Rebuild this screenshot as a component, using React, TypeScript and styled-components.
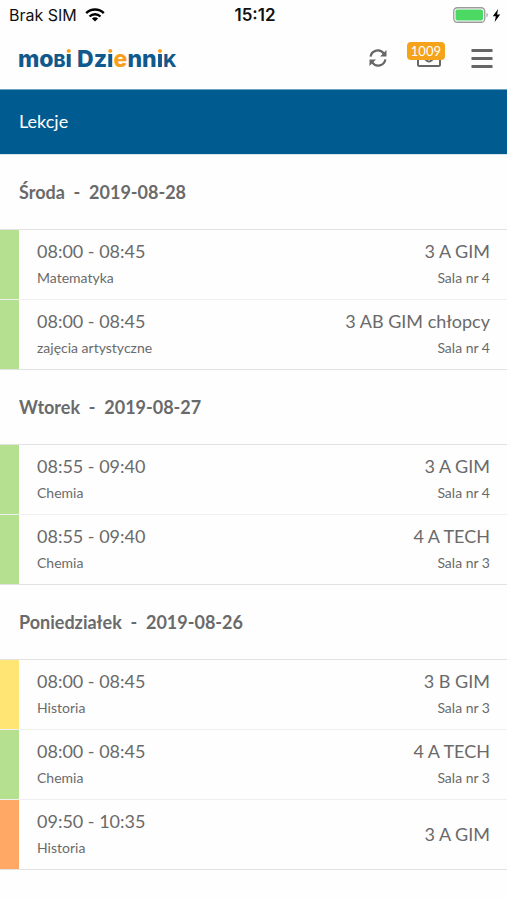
import React from "react";
import styled, { createGlobalStyle } from "styled-components";

type Tone = "green" | "yellow" | "orange";

interface Lesson {
  time: string;
  subject: string;
  group: string;
  room?: string;
  tone: Tone;
}

interface Day {
  name: string;
  date: string;
  lessons: Lesson[];
}

const tones: Record<Tone, string> = {
  green: "#b5e08f",
  yellow: "#ffe573",
  orange: "#ffa764",
};

const days: Day[] = [
  {
    name: "Środa",
    date: "2019-08-28",
    lessons: [
      { time: "08:00 - 08:45", subject: "Matematyka", group: "3 A GIM", room: "Sala nr 4", tone: "green" },
      { time: "08:00 - 08:45", subject: "zajęcia artystyczne", group: "3 AB GIM chłopcy", room: "Sala nr 4", tone: "green" },
    ],
  },
  {
    name: "Wtorek",
    date: "2019-08-27",
    lessons: [
      { time: "08:55 - 09:40", subject: "Chemia", group: "3 A GIM", room: "Sala nr 4", tone: "green" },
      { time: "08:55 - 09:40", subject: "Chemia", group: "4 A TECH", room: "Sala nr 3", tone: "green" },
    ],
  },
  {
    name: "Poniedziałek",
    date: "2019-08-26",
    lessons: [
      { time: "08:00 - 08:45", subject: "Historia", group: "3 B GIM", room: "Sala nr 3", tone: "yellow" },
      { time: "08:00 - 08:45", subject: "Chemia", group: "4 A TECH", room: "Sala nr 3", tone: "green" },
      { time: "09:50 - 10:35", subject: "Historia", group: "3 A GIM", tone: "orange" },
    ],
  },
];

const GlobalStyle = createGlobalStyle`
  *, *::before, *::after { box-sizing: border-box; }
  body {
    margin: 0;
    background: #fefefe;
    color: #6a6a6a;
    font-family: Lato, "Open Sans", sans-serif;
  }
`;

const Page = styled.div`
  min-height: 100vh;
`;

const StatusBar = styled.div`
  display: grid;
  grid-template-columns: 1fr auto 1fr;
  align-items: center;
  height: 30px;
  padding: 0 6px 0 9px;
  color: #111;
  font: 400 16px/20px Inter, "Liberation Sans", sans-serif;
`;

const Carrier = styled.div`
  display: flex;
  align-items: center;
  gap: 8px;
`;

const Clock = styled.time`
  font-size: 17px;
  font-weight: 600;
`;

const Power = styled.div`
  display: flex;
  align-items: center;
  justify-content: flex-end;
  gap: 3px;
`;

const TopBar = styled.header`
  display: flex;
  align-items: center;
  justify-content: space-between;
  height: 60px;
  padding: 0 14px 3px 18px;
  border-bottom: 1px solid #6fa3c4;
`;

const Logo = styled.a`
  padding-top: 4px;
  color: #11598c;
  font: 800 23px/28px Inter, "Open Sans", sans-serif;
  text-decoration: none;
  white-space: nowrap;
`;

const LogoCap = styled.span`
  font-size: 18px;
`;

const LogoAccent = styled.span`
  color: #f8a01c;
`;

const LogoDotted = styled.span`
  background: linear-gradient(#f8a01c 9px, #11598c 9px);
  background-clip: text;
  -webkit-background-clip: text;
  color: transparent;
`;

const Actions = styled.nav`
  display: flex;
  align-items: center;
  gap: 30px;
`;

const IconButton = styled.button`
  position: relative;
  display: flex;
  align-items: center;
  justify-content: center;
  padding: 0;
  border: 0;
  background: none;
  color: #666;
  cursor: pointer;
`;

const Badge = styled.span`
  position: absolute;
  bottom: 7px;
  right: -4px;
  padding: 0 4px;
  border-radius: 4px;
  background: #f5a31a;
  color: #fff;
  font: 400 13px/18px Lato, sans-serif;
`;

const TitleBar = styled.div`
  padding: 19px 19px 21px;
  border-bottom: 1px solid #d5e2ec;
  background: #005b90;
`;

const Title = styled.h1`
  margin: 0;
  color: #fff;
  font-size: 18px;
  font-weight: 400;
  line-height: 24px;
`;

const DayHeading = styled.h2`
  margin: 0;
  padding: 25px 19px;
  font-size: 18px;
  font-weight: 700;
  line-height: 24px;
  white-space: pre-wrap;
`;

const LessonList = styled.ul`
  margin: 0;
  padding: 0;
  border: solid #e2e2e2;
  border-width: 1px 0;
  list-style: none;
`;

const LessonRow = styled.li<{ $tone: Tone }>`
  display: flex;
  align-items: center;
  justify-content: space-between;
  min-height: 69px;
  padding: 0 17px 0 18px;
  border-left: 19px solid ${({ $tone }) => tones[$tone]};
`;

const Separator = styled.li`
  height: 1px;
  background: #efefef;
`;

const Column = styled.div<{ $end?: boolean }>`
  display: flex;
  flex-direction: column;
  gap: 5px;
  padding-bottom: 2px;
  text-align: ${({ $end }) => ($end ? "right" : "left")};
`;

const Primary = styled.span`
  font-size: 18px;
  line-height: 24px;
`;

const Secondary = styled.span`
  font-size: 14px;
  line-height: 20px;
`;

const WifiIcon = () => (
  <svg width="20" height="14" viewBox="0 0 20 14" fill="none" stroke="#000" strokeWidth="2.4" aria-label="Wi-Fi">
    <path d="M1.2 5.2a12.4 12.4 0 0 1 17.6 0" />
    <path d="M4.5 8.5a7.8 7.8 0 0 1 11 0" />
    <path d="M10 13.6 6.9 10.6a4.4 4.4 0 0 1 6.2 0z" fill="#000" stroke="none" />
  </svg>
);

const BatteryIcon = () => (
  <svg width="36" height="16" viewBox="0 0 36 16" aria-label="Bateria">
    <rect x="0.75" y="0.75" width="31" height="14.5" rx="3.5" fill="#fff" stroke="#9b9b9b" strokeWidth="1.3" />
    <rect x="2.5" y="2.5" width="27.5" height="11" rx="1.8" fill="#4bd964" />
    <path d="M33.5 5.5c1.6.8 1.6 4.2 0 5z" fill="#9b9b9b" />
  </svg>
);

const BoltIcon = () => (
  <svg width="9" height="13" viewBox="0 0 8 13" aria-label="Ładowanie">
    <path d="M5.6 0 .3 7.200h3L2.200 13 7.700 5.400H4.600z" fill="#000" />
  </svg>
);

const RefreshIcon = () => (
  <svg width="18" height="18" viewBox="0 0 18 18" aria-hidden="true">
    <g fill="none" stroke="currentColor" strokeWidth="2.2">
      <path d="M1.600 7.600A7.300 7.300 0 0 1 14.800 4.600" />
      <path d="M16.400 10.400A7.300 7.300 0 0 1 3.200 13.400" />
    </g>
    <path d="M17.500 1v6.500H11zM.5 17v-6.500H7z" fill="currentColor" />
  </svg>
);

const MailIcon = () => (
  <svg width="24" height="17" viewBox="0 0 24 17" fill="none" stroke="currentColor" strokeWidth="2" aria-hidden="true">
    <rect x="1" y="1" width="22" height="15" rx="1.500" />
    <path d="M2 4.500 10 10.700q2 1.500 4 0L22 4.500" />
  </svg>
);

const MenuIcon = () => (
  <svg width="22" height="20" viewBox="0 0 22 20" stroke="currentColor" strokeWidth="3" aria-hidden="true">
    <path d="M.5 2.500h21M.5 10.500h21M.5 18.500h21" />
  </svg>
);

export default function App() {
  return (
    <>
      <GlobalStyle />
      <Page>
        <StatusBar>
          <Carrier>
            Brak SIM
            <WifiIcon />
          </Carrier>
          <Clock>15:12</Clock>
          <Power>
            <BatteryIcon />
            <BoltIcon />
          </Power>
        </StatusBar>
        <TopBar>
          <Logo href="#">
            mo<LogoCap>B</LogoCap>
            <LogoDotted>i</LogoDotted> Dz<LogoDotted>i</LogoDotted>
            <LogoAccent>e</LogoAccent>nn<LogoDotted>i</LogoDotted>
            <LogoCap>K</LogoCap>
          </Logo>
          <Actions>
            <IconButton type="button" aria-label="Odśwież">
              <RefreshIcon />
            </IconButton>
            <IconButton type="button" aria-label="Wiadomości: 1009">
              <MailIcon />
              <Badge>1009</Badge>
            </IconButton>
            <IconButton type="button" aria-label="Menu">
              <MenuIcon />
            </IconButton>
          </Actions>
        </TopBar>
        <TitleBar>
          <Title>Lekcje</Title>
        </TitleBar>
        <main>
          {days.map((day) => (
            <section key={day.date}>
              <DayHeading>{`${day.name}  -  ${day.date}`}</DayHeading>
              <LessonList>
                {day.lessons.map((lesson, index) => (
                  <React.Fragment key={index}>
                    {index > 0 && <Separator role="presentation" />}
                    <LessonRow $tone={lesson.tone}>
                      <Column>
                        <Primary>{lesson.time}</Primary>
                        <Secondary>{lesson.subject}</Secondary>
                      </Column>
                      <Column $end>
                        <Primary>{lesson.group}</Primary>
                        {lesson.room && <Secondary>{lesson.room}</Secondary>}
                      </Column>
                    </LessonRow>
                  </React.Fragment>
                ))}
              </LessonList>
            </section>
          ))}
        </main>
      </Page>
    </>
  );
}
